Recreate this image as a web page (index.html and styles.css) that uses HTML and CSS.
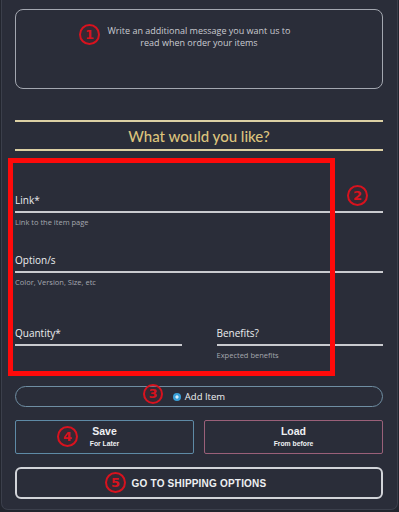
FILE: index.html
```html
<!DOCTYPE html>
<html>
<head>
<meta charset="utf-8">
<link rel="stylesheet" href="styles.css">
</head>
<body>
<div class="page">
  <div class="message">
    <p>Write an additional message you want us to<br>read when order your items</p>
  </div>
  <h2 class="heading">What would you like?</h2>
  <div class="fields">
    <div class="field">
      <div class="label">Link*</div>
      <div class="help">Link to the item page</div>
    </div>
    <div class="field">
      <div class="label">Option/s</div>
      <div class="help">Color, Version, Size, etc</div>
    </div>
    <div class="row">
      <div class="field">
        <div class="label">Quantity*</div>
        <div class="help"></div>
      </div>
      <div class="field">
        <div class="label">Benefits?</div>
        <div class="help">Expected benefits</div>
      </div>
    </div>
  </div>
  <button class="add"><span class="plus"><svg width="8" height="8" viewBox="0 0 8 8"><circle cx="4" cy="4" r="4" fill="#3aa0d8"/><path d="M4 2.2v3.6M2.2 4h3.6" stroke="#fff" stroke-width="1.2"/></svg></span>Add Item</button>
  <div class="pair">
    <button class="half save"><span class="big">Save</span><span class="small">For Later</span></button>
    <button class="half load"><span class="big">Load</span><span class="small">From before</span></button>
  </div>
  <button class="go">GO TO SHIPPING OPTIONS</button>

  <div class="mark rect"></div>
  <div class="mark num n1">1</div>
  <div class="mark num n2">2</div>
  <div class="mark num n3">3</div>
  <div class="mark num n4">4</div>
  <div class="mark num n5">5</div>
</div>
</body>
</html>
```
FILE: styles.css
```css
html, body {
  margin: 0;
  padding: 0;
  background: #22252e;
}
body {
  font-family: "Open Sans", "Lato", sans-serif;
  color: #e6e7ea;
  width: 399px;
  height: 512px;
  overflow: hidden;
}
.page {
  position: relative;
  margin: 0 1px;
  background: #2a2d39;
  border: 1px solid #3b3f4b;
  border-top: none;
  border-radius: 0 0 7px 7px;
  padding: 9px 14px 10px 13px;
}
.message {
  height: 78px;
  border: 1px solid #a3a7b0;
  border-radius: 8px;
  text-align: center;
}
.message p {
  margin: 15px 0 0;
  font-size: 9px;
  line-height: 12px;
  color: #c9cbd1;
}
.heading {
  margin: 31px 0 0;
  border-top: 2px solid #dcd0a4;
  border-bottom: 2px solid #dcd0a4;
  height: 27px;
  line-height: 28px;
  text-align: center;
  font-family: "Lato", "Open Sans", sans-serif;
  font-weight: 500;
  font-size: 15px;
  color: #dcc37c;
}
.fields {
  padding-top: 42px;
  display: flex;
  flex-direction: column;
  gap: 25px;
}
.row {
  margin-top: 13px;
  display: flex;
  gap: 35px;
}
.row .field {
  flex: 1;
}
.label {
  font-size: 10px;
  line-height: 14px;
  padding-bottom: 4px;
  border-bottom: 2px solid #c9cacf;
  color: #eceef0;
}
.help {
  margin-top: 3px;
  font-size: 7.5px;
  line-height: 12px;
  height: 12px;
  color: #a4a7ae;
}
button {
  font-family: "Liberation Sans", Arial, sans-serif;
  color: #eef0f2;
  background: transparent;
  cursor: pointer;
}
.add {
  display: flex;
  align-items: center;
  justify-content: center;
  gap: 4px;
  width: 100%;
  margin-top: 25px;
  height: 21px;
  border: 1px solid #6f8ea3;
  border-radius: 11px;
  font-family: "Open Sans", sans-serif;
  font-size: 9.5px;
  padding: 0;
}
.plus {
  display: flex;
}
.pair {
  display: flex;
  gap: 10px;
  margin-top: 13px;
}
.half {
  flex: 1;
  height: 34px;
  border-radius: 2px;
  padding: 0;
  display: flex;
  flex-direction: column;
  align-items: center;
  justify-content: center;
  font-weight: bold;
}
.save { border: 1px solid #5e8aa6; }
.load { border: 1px solid #9a6079; }
.big {
  font-size: 10.5px;
  line-height: 13px;
}
.small {
  font-size: 6.8px;
  line-height: 11px;
}
.go {
  display: block;
  width: 100%;
  margin-top: 13px;
  height: 32px;
  border: 2px solid #d2d4d9;
  border-radius: 6px;
  font-weight: bold;
  font-size: 10px;
  letter-spacing: 0.2px;
  padding: 0;
}
.mark {
  position: absolute;
  pointer-events: none;
}
.rect {
  left: 6px;
  top: 158px;
  width: 317px;
  height: 208px;
  border: 5px solid #ff0a0a;
}
.num {
  width: 17px;
  height: 17px;
  border: 2px solid #d8121e;
  border-radius: 50%;
  color: #d8121e;
  font-family: "DejaVu Sans", sans-serif;
  font-weight: bold;
  font-size: 13px;
  line-height: 17px;
  text-align: center;
  background: rgba(120, 20, 30, 0.15);
}
.n1 { left: 77px; top: 24px; }
.n2 { left: 345px; top: 185px; }
.n3 { left: 141px; top: 384px; width: 16px; height: 16px; line-height: 16px; }
.n4 { left: 55px; top: 426px; }
.n5 { left: 103px; top: 472px; }
```
